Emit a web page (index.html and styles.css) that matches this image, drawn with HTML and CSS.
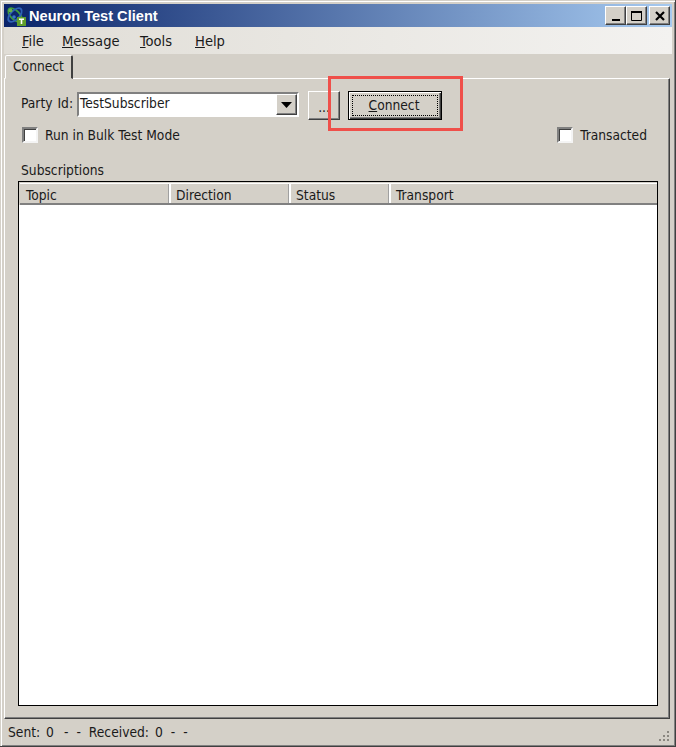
FILE: index.html
```html
<!DOCTYPE html>
<html lang="en">
<head>
<meta charset="utf-8">
<title>Neuron Test Client</title>
<link rel="stylesheet" href="styles.css">
</head>
<body>
<div class="window">
  <div class="titlebar">
    <svg class="app-icon" width="20" height="20" viewBox="0 0 20 20">
      <ellipse cx="9" cy="9" rx="8.500" ry="4.500" transform="rotate(45 9 9)" fill="none" stroke="#3f9a3f" stroke-width="1.800"/>
      <ellipse cx="9" cy="9" rx="8.500" ry="4.500" transform="rotate(-45 9 9)" fill="none" stroke="#2f62b8" stroke-width="1.800"/>
      <circle cx="4.500" cy="4.500" r="2" fill="#66b04a"/>
      <circle cx="8" cy="11" r="1.800" fill="#3a78c8"/>
      <rect x="11" y="11" width="9" height="9" fill="#5f9e2c"/>
      <path d="M13 12.500h5v1.600h-1.700v4h-1.600v-4H13z" fill="#fff"/>
    </svg>
    <span class="title-text">Neuron Test Client</span>
    <div class="caption-btns">
      <div class="cap-btn"><svg width="16" height="14" viewBox="0 0 16 14"><rect x="4" y="10" width="8" height="2" fill="#000"/></svg></div>
      <div class="cap-btn"><svg width="16" height="14" viewBox="0 0 16 14"><path d="M2.500 2.500h10v9h-10z" fill="none" stroke="#000"/><rect x="2" y="2" width="11" height="2" fill="#000"/></svg></div>
      <div class="cap-btn cap-close"><svg width="16" height="14" viewBox="0 0 16 14"><path d="M4 3l8 8M12 3l-8 8" stroke="#000" stroke-width="2.200" fill="none"/></svg></div>
    </div>
  </div>
  <div class="menubar">
    <span class="menu-item"><u>F</u>ile</span>
    <span class="menu-item"><u>M</u>essage</span>
    <span class="menu-item"><u>T</u>ools</span>
    <span class="menu-item"><u>H</u>elp</span>
  </div>
  <div class="tabstrip"><div class="tab">Connect</div></div>
  <div class="tabpage">
    <div class="party-row">
      <span class="party-label">Party Id:</span>
      <div class="combo">
        <span class="combo-text">TestSubscriber</span>
        <div class="combo-arrow"><svg width="11" height="6" viewBox="0 0 11 6"><path d="M0 0h11L5.500 6z" fill="#000"/></svg></div>
      </div>
      <div class="btn btn-dots">...</div>
      <div class="btn btn-default"><span class="focus-rect"><span class="connect-label"><u>C</u>onnect</span></span></div>
    </div>
    <div class="check-row">
      <label class="check"><span class="box"></span>Run in Bulk Test Mode</label>
      <label class="check"><span class="box"></span>Transacted</label>
    </div>
    <div class="group-label">Subscriptions</div>
    <div class="listview">
      <div class="list-header">
        <div class="col col-topic">Topic</div>
        <div class="col col-direction">Direction</div>
        <div class="col col-status">Status</div>
        <div class="col col-transport">Transport</div>
      </div>
      <div class="list-body"></div>
    </div>
  </div>
  <div class="statusbar">
    <span>Sent: 0</span><span class="dash-first">-</span><span>-</span><span class="received">Received: 0</span><span>-</span><span>-</span>
    <svg class="grip" width="12" height="12" viewBox="0 0 12 12">
      <path d="M8 1h2v2H8zM4 5h2v2H4zM8 5h2v2H8zM0 9h2v2H0zM4 9h2v2H4zM8 9h2v2H8z" fill="#8a8780"/>
    </svg>
  </div>
  <div class="highlight"></div>
</div>
</body>
</html>
```
FILE: styles.css
```css
* { box-sizing: border-box; }
html, body { margin: 0; padding: 0; }
body {
  width: 676px;
  height: 747px;
  overflow: hidden;
  background: #d4d0c8;
  font-family: "DejaVu Sans", "Noto Sans", sans-serif;
  font-stretch: condensed;
  font-size: 13.700px;
  color: #1a1a1a;
}
.window {
  position: relative;
  width: 676px;
  height: 747px;
  padding: 4px 4px 2px 4px;
  display: flex;
  flex-direction: column;
  background: #d4d0c8;
  border-right: 1px solid #404040;
  border-bottom: 1px solid #404040;
  box-shadow: inset 1px 1px 0 #d4d0c8, inset 2px 2px 0 #fff, inset -1px -1px 0 #808080;
}
.titlebar {
  height: 23px;
  flex: none;
  display: flex;
  align-items: center;
  padding-left: 2px;
  margin-right: -1px;
  background: linear-gradient(90deg, #0a246a, #a6caf0);
}
.app-icon { flex: none; }
.title-text {
  margin-left: 3px;
  font-family: "Liberation Sans", sans-serif;
  font-stretch: normal;
  font-weight: bold;
  font-size: 14.600px;
  color: #fff;
}
.caption-btns {
  margin-left: auto;
  margin-right: 2px;
  display: flex;
}
.cap-btn {
  width: 21px;
  height: 19px;
  display: flex;
  align-items: center;
  justify-content: center;
  background: #d4d0c8;
  border: 1px solid;
  border-color: #fff #404040 #404040 #fff;
  box-shadow: inset -1px -1px 0 #808080;
}
.cap-close { margin-left: 2px; }
.menubar {
  height: 27px;
  flex: none;
  display: grid;
  grid-template-columns: 40px 78px 55px auto;
  align-items: center;
  padding-left: 18px;
  margin-right: -1px;
  font-size: 14.600px;
  background: linear-gradient(90deg, #e0ddd6, #f3f2f0);
}
.tabstrip {
  height: 24px;
  flex: none;
  padding-left: 1px;
  display: flex;
  align-items: flex-end;
}
.tab {
  width: 68px;
  height: 24px;
  padding-left: 7px;
  line-height: 20px;
  border: 1px solid;
  border-color: #fff #404040 transparent #fff;
  border-right-width: 2px;
  border-radius: 2px 2px 0 0;
  margin-bottom: -1px;
  position: relative;
  background: #d4d0c8;
}
.tabpage {
  flex: 1;
  min-height: 0;
  margin-right: 1px;
  padding: 12px 11px 12px 14px;
  display: flex;
  flex-direction: column;
  border: 1px solid;
  border-color: #fff #404040 #404040 #fff;
  box-shadow: inset -1px -1px 0 #808080;
}
.party-row {
  display: flex;
  align-items: flex-start;
  height: 29px;
  padding-left: 2px;
}
.party-label { margin-top: 4px; width: 56px; flex: none; word-spacing: 1px; }
.combo {
  width: 222px;
  height: 25px;
  margin-top: 1px;
  flex: none;
  background: #fff;
  display: flex;
  align-items: center;
  justify-content: space-between;
  border: 2px solid;
  border-color: #808080 #fff #fff #808080;
  padding-left: 1px;
}
.combo-text { margin-top: -3px; }
.combo-arrow {
  width: 21px;
  height: 21px;
  background: #d4d0c8;
  display: flex;
  align-items: center;
  justify-content: center;
  border: 1px solid;
  border-color: #fff #404040 #404040 #fff;
  box-shadow: inset -1px -1px 0 #808080;
}
.btn {
  flex: none;
  height: 29px;
  display: flex;
  align-items: center;
  justify-content: center;
  background: #d4d0c8;
}
.btn-dots {
  width: 32px;
  margin-left: 9px;
  padding-top: 3px;
  border: 1px solid;
  border-color: #fff #404040 #404040 #fff;
  box-shadow: inset -1px -1px 0 #808080;
}
.btn-default {
  width: 94px;
  margin-left: 8px;
  border: 1px solid #000;
  box-shadow: inset 1px 1px 0 #fff, inset -1px -1px 0 #404040, inset -2px -2px 0 #808080;
}
.focus-rect {
  width: 86px;
  height: 21px;
  display: flex;
  align-items: center;
  justify-content: center;
  border: 1px dotted #000;
}
.connect-label { margin: -2px 2px 0 0; }
.check-row {
  display: flex;
  justify-content: space-between;
  margin-top: 6px;
  padding: 0 11px 0 3px;
  height: 17px;
}
.check {
  display: flex;
  align-items: center;
  gap: 7px;
}
.box {
  width: 16px;
  height: 16px;
  background: #fff;
  border: 2px solid;
  border-color: #808080 #f4f4f4 #f4f4f4 #808080;
  box-shadow: inset 1px 1px 0 #404040;
}
.group-label {
  margin-top: 17px;
  height: 21px;
  line-height: 20px;
  padding-left: 2px;
}
.listview {
  flex: 1;
  min-height: 0;
  display: flex;
  flex-direction: column;
  border: 1px solid #000;
  margin-left: -1px;
  padding: 1px 1px 0;
  background: #d4d0c8;
}
.list-header {
  display: flex;
  flex: none;
  height: 22px;
  margin: 0 -1px 0 0;
  border-top: 1px solid #fff;
  border-bottom: 2px solid #808080;
}
.col {
  height: 19px;
  line-height: 23px;
  padding-left: 5px;
  border-right: 2px solid #fff;
  box-shadow: inset -1px 0 0 #a0a0a0;
}
.col-topic { width: 151px; padding-left: 6px; }
.col-direction { width: 120px; }
.col-status { width: 100px; }
.col-transport { flex: 1; border-right: 0; box-shadow: none; }
.list-body {
  flex: 1;
  background: #fff;
  margin: 0 -1px;
}
.statusbar {
  flex: none;
  height: 25px;
  display: flex;
  align-items: center;
  gap: 8px;
  padding-left: 4px;
  word-spacing: 2px;
  position: relative;
}
.dash-first { margin-left: 2px; }
.grip {
  position: absolute;
  right: 0;
  bottom: 2px;
}
.highlight {
  position: absolute;
  left: 328px;
  top: 76px;
  width: 135px;
  height: 55px;
  border: 3px solid #ef4f4a;
  pointer-events: none;
}
```
